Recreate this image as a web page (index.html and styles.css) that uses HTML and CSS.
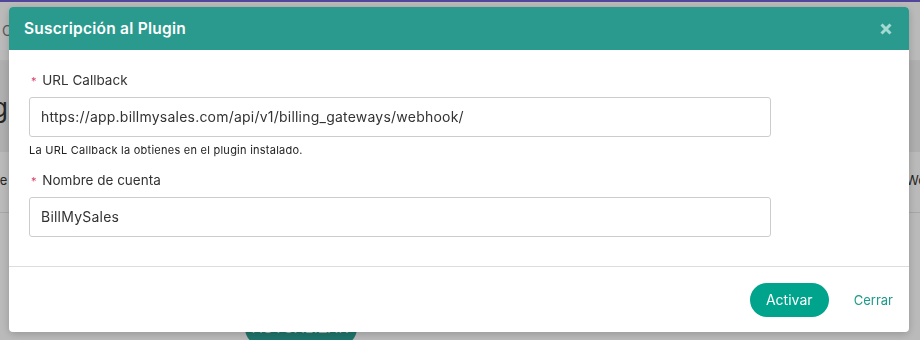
FILE: index.html
```html
<!DOCTYPE html>
<html lang="es">
<head>
  <meta charset="UTF-8">
  <meta name="viewport" content="width=device-width, initial-scale=1.0">
  <title>Suscripción al Plugin</title>
  <link rel="stylesheet" href="styles.css">
</head>
<body>
  <!-- Pagina de fondo -->
  <div class="page">
    <div class="topbar">C</div>
    <div class="section-head">g</div>
    <div class="row"><span>re</span><span>Wo</span></div>
    <div class="page-actions">
      <button class="btn-update">ACTUALIZAR</button>
    </div>
  </div>

  <!-- Modal -->
  <div class="backdrop"></div>
  <div class="modal">
    <div class="modal-header">
      <h2>Suscripción al Plugin</h2>
      <svg class="close" width="12" height="12" viewBox="0 0 12 12">
        <path d="M1.5 1.5 L10.5 10.5 M10.5 1.5 L1.5 10.5" stroke="#a4dad2" stroke-width="3" stroke-linecap="butt"/>
      </svg>
    </div>
    <div class="modal-body">
      <div class="field">
        <label><span class="req">*</span> URL Callback</label>
        <div class="input">https://app.billmysales.com/api/v1/billing_gateways/webhook/</div>
        <p class="hint">La URL Callback la obtienes en el plugin instalado.</p>
      </div>
      <div class="field">
        <label><span class="req">*</span> Nombre de cuenta</label>
        <div class="input">BillMySales</div>
      </div>
    </div>
    <div class="modal-footer">
      <button class="btn-activate">Activar</button>
      <a class="btn-close">Cerrar</a>
    </div>
  </div>
</body>
</html>
```

FILE: styles.css
```css
body {
  margin: 0;
  font-family: Inter, "Noto Sans", sans-serif;
  background-color: #fbfbfb;
  color: #333;
  border-top: 2px solid #6c5fd0;
}

.page {
  height: 338px;
  overflow: hidden;
}

.topbar {
  height: 60px;
  padding: 20px 0 0 2px;
  box-sizing: border-box;
  font-size: 14px;
  color: #777;
  border-bottom: 2px solid #eee;
}

.section-head {
  height: 90px;
  background-color: #ececec;
  font-size: 26px;
  padding: 30px 0 0 0;
  box-sizing: border-box;
  margin-left: -8px;
}

.row {
  display: flex;
  justify-content: space-between;
  height: 61px;
  padding: 20px 0 0 0;
  box-sizing: border-box;
  border-bottom: 1px solid #e2e2e2;
  font-size: 13px;
  margin: 0 -6px 0 -5px;
}

.page-actions {
  padding: 97px 0 0 245px;
}

.btn-update {
  width: 112px;
  height: 36px;
  border: none;
  border-radius: 18px;
  background-color: #2a9d90;
  color: #e8f4f2;
  font-size: 14px;
  letter-spacing: 1px;
}

.backdrop {
  position: fixed;
  inset: 0;
  background-color: rgba(0, 0, 0, 0.26);
}

.modal {
  position: fixed;
  left: 9px;
  top: 7px;
  width: 900px;
  background-color: white;
  border-radius: 4px;
  overflow: hidden;
  box-shadow: 0 2px 8px rgba(0, 0, 0, 0.2);
}

.modal-header {
  display: flex;
  justify-content: space-between;
  align-items: center;
  height: 43px;
  padding: 0 17px 0 15px;
  background-color: #2a9a8e;
}

.modal-header h2 {
  margin: 0;
  font-size: 15.5px;
  font-weight: 600;
  letter-spacing: 0.25px;
  color: white;
}

.modal-body {
  padding: 22px 138px 29px 20px;
  border-bottom: 1px solid #ddd;
}

.field label {
  display: block;
  font-size: 13.5px;
  color: #333;
  margin-bottom: 9px;
}

.req {
  color: #d9406b;
  font-size: 11px;
  margin: 0 2px 0 2px;
}

.input {
  height: 40px;
  border: 1px solid #ccc;
  border-radius: 3px;
  box-sizing: border-box;
  padding: 0 11px;
  line-height: 38px;
  font-size: 14px;
  letter-spacing: 0.22px;
  color: #333;
}

.hint {
  font-size: 11px;
  letter-spacing: 0.25px;
  color: #222;
  margin: 6px 0 15px 0;
}

.modal-footer {
  display: flex;
  justify-content: flex-end;
  align-items: center;
  height: 65px;
  padding-right: 16px;
}

.btn-activate {
  width: 79px;
  height: 34px;
  border: none;
  border-radius: 17px;
  background-color: #00a38c;
  color: white;
  font-family: Inter, "Noto Sans", sans-serif;
  font-size: 14px;
  margin-right: 25px;
}

.btn-close {
  color: #1c9a8a;
  font-size: 13px;
}
```
